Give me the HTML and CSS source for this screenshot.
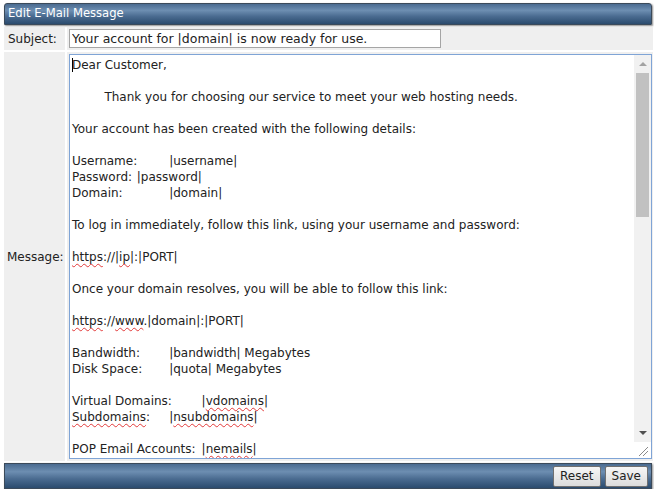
FILE: index.html
```html
<!DOCTYPE html>
<html>
<head>
    <title>Edit E-Mail Message</title>
    <link rel="stylesheet" href="styles.css">
</head>
<body>
    <div class="panel">
        <div class="bar title">Edit E-Mail Message</div>

        <div class="form">
            <div class="label">Subject:</div>
            <div class="field">
                <input type="text" class="subject" value="Your account for |domain| is now ready for use.">
            </div>

            <div class="label middle">Message:</div>
            <div class="field">
                <div class="editor">
<div class="message" contenteditable="true" spellcheck="false"><span class="caret"></span>Dear Customer,

	Thank you for choosing our service to meet your web hosting needs.

Your account has been created with the following details:

Username:	|username|
Password:	|password|
Domain:		|domain|

To log in immediately, follow this link, using your username and password:

<span class="typo">https</span>://|<span class="typo">ip</span>|:|PORT|

Once your domain resolves, you will be able to follow this link:

<span class="typo">https</span>://<span class="typo">www</span>.|domain|:|PORT|

Bandwidth:	|bandwidth| Megabytes
Disk Space:	|quota| Megabytes

Virtual Domains:	|<span class="typo">vdomains</span>|
<span class="typo">Subdomains</span>:	|<span class="typo">nsubdomains</span>|

POP Email Accounts:	|<span class="typo">nemails</span>|
Forwarders:		|nemailf|
Mailing Lists:		|nemailml|
Autoresponders:	|nemailr|

MySQL Databases:	|mysql|
Domain Pointers:	|domainptr|
Ftp Accounts:		|ftp|

Thank you,
Support Team</div>
                    <div class="scrollbar">
                        <div class="sb-btn"><span class="arrow up"></span></div>
                        <div class="sb-track"><div class="sb-thumb"></div></div>
                        <div class="sb-btn"><span class="arrow down"></span></div>
                        <div class="sb-resizer">
                            <svg width="16" height="16" viewBox="0 0 16 16">
                                <line x1="5" y1="14" x2="14" y2="5" stroke="#8a8a8a" stroke-width="1"/>
                                <line x1="9" y1="14" x2="14" y2="9" stroke="#8a8a8a" stroke-width="1"/>
                            </svg>
                        </div>
                    </div>
                </div>
            </div>
        </div>

        <div class="bar footer">
            <button type="button">Reset</button>
            <button type="button">Save</button>
        </div>
    </div>
</body>
</html>
```

FILE: styles.css
```css
body {
    margin: 0;
    padding: 3px 2px 0 4px;
    background-color: #fff;
    font-family: "DejaVu Sans", sans-serif;
    font-size: 12px;
    color: #222;
}
.panel {
    width: 648px;
}
.bar {
    background: linear-gradient(to bottom, #4a6b90 0%, #6d8eb1 32%, #4a6b90 62%, #2b4b6e 100%);
    border: 1px solid #3b4a5a;
    box-shadow: 1px 1px 2px rgba(0,0,0,0.45);
    border-radius: 3px 3px 0 0;
}
.title {
    height: 20px;
    line-height: 19px;
    padding-left: 3px;
    color: #fff;
    font-size: 11.6px;
}
.form {
    display: grid;
    grid-template-columns: 61px 1fr;
    column-gap: 2px;
    row-gap: 2px;
    margin: 2px 0;
}
.label {
    background-color: #efefef;
    padding: 3px 0 0 4px;
    line-height: 18px;
}
.label.middle {
    display: flex;
    align-items: center;
    padding: 0 0 0 3px;
}
.field {
    background-color: #efefef;
    padding: 2px 1px 2px 2px;
}
.subject {
    display: block;
    width: 372px;
    height: 19px;
    box-sizing: border-box;
    margin: 0;
    padding: 0 2px;
    border: 1px solid #a5a5a5;
    font-family: inherit;
    font-size: 12.5px;
    color: #222;
}
.editor {
    display: flex;
    width: 583px;
    height: 405px;
    box-sizing: border-box;
    border: 1px solid #7fa4d6;
    background-color: #fff;
}
.message {
    flex: 1;
    padding: 2px 2px;
    outline: none;
    overflow: hidden;
    font-size: 12px;
    line-height: 16px;
    color: #222;
    tab-size: 32.4px;
    white-space: pre-wrap;
}
.caret {
    display: inline-block;
    width: 0;
    height: 14px;
    margin-right: -1px;
    border-left: 1px solid #000;
    vertical-align: -3px;
}
.typo {
    text-decoration: underline wavy #e23a3a;
    text-decoration-thickness: 1px;
    text-underline-offset: 2px;
    text-decoration-skip-ink: none;
}
.scrollbar {
    width: 17px;
    display: flex;
    flex-direction: column;
    background-color: #f1f1f1;
}
.sb-btn {
    height: 16px;
    display: flex;
    align-items: center;
    justify-content: center;
}
.arrow {
    width: 0;
    height: 0;
    border-left: 4px solid transparent;
    border-right: 4px solid transparent;
}
.arrow.up {
    border-bottom: 4px solid #a3a3a3;
    margin-top: 1px;
}
.arrow.down {
    border-top: 4px solid #505050;
}
.sb-track {
    flex: 1;
    padding: 2px 2px 0 2px;
}
.sb-thumb {
    height: 144px;
    background-color: #c1c1c1;
}
.sb-resizer {
    height: 17px;
    background-color: #fff;
    border-top: 1px solid #f1f1f1;
    box-sizing: border-box;
}
.sb-resizer svg {
    display: block;
}
.footer {
    height: 24px;
    border-radius: 0;
    display: flex;
    justify-content: flex-end;
    align-items: center;
    gap: 4px;
    padding-right: 3px;
}
button {
    height: 21px;
    padding: 0 6px;
    font-family: inherit;
    font-size: 12px;
    color: #222;
    background: linear-gradient(to bottom, #f6f6f6, #dcdcdc);
    border: 1px solid #707070;
    border-radius: 2px;
    cursor: pointer;
}
button:hover {
    background: linear-gradient(to bottom, #eaf6fd, #bee6fd);
}
```
